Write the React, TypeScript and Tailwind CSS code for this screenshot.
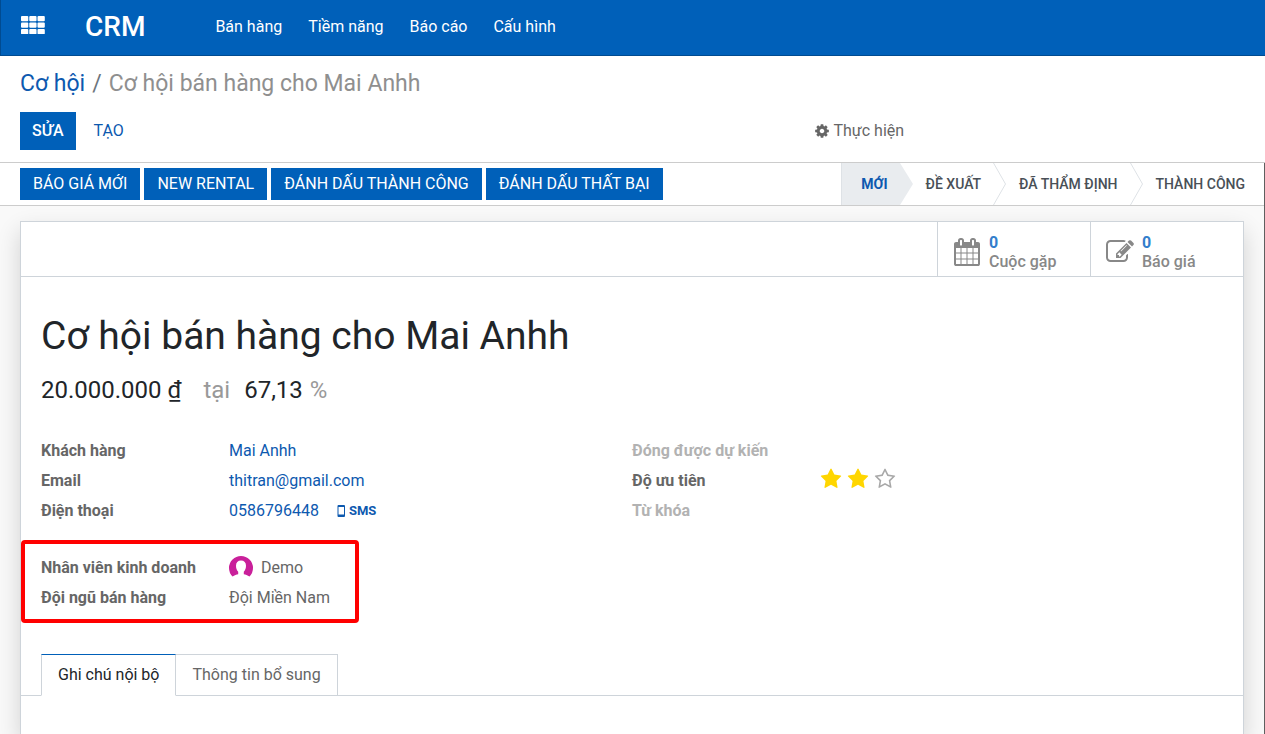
import { useState, type ReactNode } from 'react';
import clsx from 'clsx';

const ICONS = {
  cog: 'M1152 896q0-106-75-181t-181-75-181 75-75 181 75 181 181 75 181-75 75-181zm512-109v222q0 12-8 23t-20 13l-185 28q-19 54-39 91 35 50 107 138 10 12 10 25t-9 23q-27 37-99 108t-94 71q-12 0-26-9l-138-108q-44 23-91 38-16 136-29 186-7 28-36 28h-222q-14 0-24.5-8.5t-11.5-21.5l-28-184q-49-16-90-37l-141 107q-10 9-25 9-14 0-25-11-126-114-165-168-7-10-7-23 0-12 8-23 15-21 51-66.5t54-70.5q-27-50-41-99l-183-27q-13-2-21-12.5t-8-23.5v-222q0-12 8-23t19-13l186-28q14-46 39-92-40-57-107-138-10-12-10-24 0-10 9-23 26-36 98.5-107.5t94.5-71.5q13 0 26 10l138 107q44-23 91-38 16-136 29-186 7-28 36-28h222q14 0 24.5 8.5t11.5 21.5l28 184q49 16 90 37l142-107q9-9 24-9 13 0 25 10 129 119 165 170 7 8 7 22 0 12-8 23-15 21-51 66.5t-54 70.5q26 50 41 98l183 28q13 2 21 12.5t8 23.5z',
  star: 'M1728 647q0 22-26 48l-363 354 86 500q1 7 1 20 0 21-10.5 35.5t-30.5 14.5q-19 0-40-12l-449-236-449 236q-22 12-40 12-21 0-31.5-14.5t-10.5-35.5q0-6 2-20l86-500-364-354q-25-27-25-48 0-37 56-46l502-73 225-455q19-41 49-41t49 41l225 455 502 73q56 9 56 46z',
  starOutline:
    'M1201 1004l306-297-422-62-189-382-189 382-422 62 306 297-73 421 378-199 377 199zm527-357q0 22-26 48l-363 354 86 500q1 7 1 20 0 50-41 50-19 0-40-12l-449-236-449 236q-22 12-40 12-21 0-31.5-14.5t-10.5-35.5q0-6 2-20l86-500-364-354q-25-27-25-48 0-37 56-46l502-73 225-455q19-41 49-41t49 41l225 455 502 73q56 9 56 46z',
  edit: 'M888 1184l116-116-152-152-116 116v56h96v96h56zm440-720q-16-16-33 1l-350 350q-17 17-1 33t33-1l350-350q17-17 1-33zm80 594v190q0 119-84.5 203.5t-203.5 84.5h-832q-119 0-203.5-84.5t-84.5-203.5v-832q0-119 84.5-203.5t203.5-84.5h832q63 0 117 25 15 7 18 23 3 17-9 29l-49 49q-14 14-32 8-23-6-45-6h-832q-66 0-113 47t-47 113v832q0 66 47 113t113 47h832q66 0 113-47t47-113v-126q0-13 9-22l64-64q15-15 35-7t20 29zm-96-738l288 288-672 672h-288v-288zm444 132l-92 92-288-288 92-92q28-28 68-28t68 28l152 152q28 28 28 68t-28 68z',
  calendar:
    'M192 1664h288v-288h-288v288zm352 0h320v-288h-320v288zm-352-352h288v-320h-288v320zm352 0h320v-320h-320v320zm-352-384h288v-288h-288v288zm736 736h320v-288h-320v288zm-384-736h320v-288h-320v288zm768 736h288v-288h-288v288zm-384-352h320v-320h-320v320zm-352-864v-288q0-13-9.5-22.5t-22.5-9.5h-64q-13 0-22.5 9.5t-9.5 22.5v288q0 13 9.5 22.5t22.5 9.5h64q13 0 22.5-9.5t9.5-22.5zm736 864h288v-320h-288v320zm-384-384h320v-288h-320v288zm384 0h288v-288h-288v288zm32-480v-288q0-13-9.5-22.5t-22.5-9.5h-64q-13 0-22.5 9.5t-9.5 22.5v288q0 13 9.5 22.5t22.5 9.5h64q13 0 22.5-9.5t9.5-22.5zm384-64v1280q0 52-38 90t-90 38h-1408q-52 0-90-38t-38-90v-1280q0-52 38-90t90-38h128v-96q0-66 47-113t113-47h64q66 0 113 47t47 113v96h384v-96q0-66 47-113t113-47h64q66 0 113 47t47 113v96h128q52 0 90 38t38 90z',
};

const MENU = ['Bán hàng', 'Tiềm năng', 'Báo cáo', 'Cấu hình'];
const ACTIONS = ['BÁO GIÁ MỚI', 'NEW RENTAL', 'ĐÁNH DẤU THÀNH CÔNG', 'ĐÁNH DẤU THẤT BẠI'];
const STAGES = ['MỚI', 'ĐỀ XUẤT', 'ĐÃ THẨM ĐỊNH', 'THÀNH CÔNG'];
const TABS = ['Ghi chú nội bộ', 'Thông tin bổ sung'];

function Icon({ name, className }: { name: keyof typeof ICONS; className?: string }) {
  return (
    <svg viewBox="0 0 1792 1792" fill="currentColor" aria-hidden="true" className={className}>
      <path d={ICONS[name]} />
    </svg>
  );
}

function AppsIcon() {
  return (
    <svg viewBox="0 0 24 18" fill="currentColor" aria-hidden="true" className="h-[18px] w-6">
      {[0, 6.5, 13].map((y) =>
        [0, 8.25, 16.5].map((x) => (
          <rect key={`${x}-${y}`} x={x} y={y} width="7.3" height="5.2" rx="1" />
        ))
      )}
    </svg>
  );
}

function Navbar() {
  return (
    <nav className="flex h-14 items-center border-b border-l border-[#004b91] bg-[#0060b9] pb-0.5 pl-5 text-white">
      <button aria-label="Ứng dụng" className="cursor-pointer pb-1">
        <AppsIcon />
      </button>
      <a href="#" className="ml-10 text-[28px] font-medium leading-8">
        CRM
      </a>
      <ul className="ml-[70px] flex gap-[26px]">
        {MENU.map((item) => (
          <li key={item}>
            <a href="#">{item}</a>
          </li>
        ))}
      </ul>
    </nav>
  );
}

function ControlPanel() {
  return (
    <header className="border-b border-[#cccccc] bg-white px-5 pt-3 pb-3">
      <ol className="flex gap-[7px] text-[23px] leading-8 text-[#8f8f8f]">
        <li>
          <a href="#" className="text-[#0d59af]">
            Cơ hội
          </a>
        </li>
        <li aria-hidden="true" className="text-[#6c757d]">
          /
        </li>
        <li>Cơ hội bán hàng cho Mai Anhh</li>
      </ol>
      <div className="mt-3 grid grid-cols-2 items-center">
        <div className="flex">
          <button className="h-[38px] bg-[#0060b9] px-3 font-medium text-white">SỬA</button>
          <button className="h-[38px] px-[18px] text-[#0d59af]">TẠO</button>
        </div>
        <button className="flex items-center gap-1 pl-[181px] text-[#666666]">
          <Icon name="cog" className="size-4" />
          Thực hiện
        </button>
      </div>
    </header>
  );
}

function StageArrow({ filled }: { filled: boolean }) {
  return (
    <svg viewBox="0 0 13 42" aria-hidden="true" className="h-[42px] w-[13px]">
      {filled ? (
        <path d="M0 0L13 21L0 42Z" fill="#e9ecef" />
      ) : (
        <path d="M0.5 0L12.5 21L0.5 42" fill="none" stroke="#dee2e6" />
      )}
    </svg>
  );
}

function StatusBar() {
  const [current, setCurrent] = useState(0);

  return (
    <div className="flex items-center justify-between border-b border-[#cccccc] bg-white pl-5">
      <div className="flex gap-1">
        {ACTIONS.map((action) => (
          <button key={action} className="h-8 bg-[#0060b9] px-[13px] text-white">
            {action}
          </button>
        ))}
      </div>
      <ol className="flex border-l border-[#dee2e6] text-sm font-medium">
        {STAGES.map((stage, i) => (
          <li key={stage} className="flex">
            <button
              onClick={() => setCurrent(i)}
              className={clsx(
                'h-[42px]',
                i === 0 ? 'pl-[19px]' : 'pl-[13px]',
                i === STAGES.length - 1 ? 'pr-[19px]' : 'pr-3',
                i === current ? 'bg-[#e9ecef] font-bold text-[#0d59af]' : 'text-[#495057]'
              )}
            >
              {stage}
            </button>
            {i < STAGES.length - 1 && <StageArrow filled={i === current} />}
          </li>
        ))}
      </ol>
    </div>
  );
}

function StatButton({ icon, label }: { icon: 'calendar' | 'edit'; label: string }) {
  return (
    <button className="flex h-[54px] w-[153px] items-center border-l border-[#ced4da] pl-[15px] pt-[6px] text-left font-medium text-[#888888]">
      <Icon name={icon} className="size-7" />
      <span className="ml-2 flex flex-col leading-[19px]">
        <span className="font-bold text-[#337ecc]">0</span>
        {label}
      </span>
    </button>
  );
}

function Field({ label, muted, children }: { label: string; muted?: boolean; children?: ReactNode }) {
  return (
    <div className="flex h-[30px] items-center">
      <dt className={clsx('w-[188px] font-bold', muted ? 'text-[#b2b2b2]' : 'text-[#666666]')}>
        {label}
      </dt>
      <dd className="flex items-center text-[#666666]">{children}</dd>
    </div>
  );
}

function Priority() {
  const [value, setValue] = useState(2);

  return (
    <div className="flex gap-[5px] pb-1">
      {[1, 2, 3].map((n) => (
        <button
          key={n}
          aria-label={`Ưu tiên ${n}`}
          onClick={() => setValue(n)}
          className={n <= value ? 'text-[#ffd600]' : 'text-[#a8a8a8]'}
        >
          <Icon name={n <= value ? 'star' : 'starOutline'} className="size-[22px]" />
        </button>
      ))}
    </div>
  );
}

function Avatar() {
  return (
    <svg viewBox="0 0 24 24" aria-hidden="true" className="size-6">
      <path
        fill="#c9209a"
        d="M3.500 20.500A12 12 0 1 1 20.500 20.500C18.500 19.200 16.500 18.800 14.800 18.300V15.800C16.300 14.300 17 12 17 9.800C17 6.500 15.200 4.500 12 4.500S7 6.500 7 9.800C7 12 7.700 14.300 9.200 15.800V18.300C7.500 18.800 5.500 19.200 3.500 20.500Z"
      />
    </svg>
  );
}

function Details() {
  return (
    <div className="mt-[30px] grid grid-cols-2 items-start">
      <div>
        <dl>
          <Field label="Khách hàng">
            <a href="#" className="text-[#0d59af]">Mai Anhh</a>
          </Field>
          <Field label="Email">
            <a href="mailto:thitran@gmail.com" className="text-[#0d59af]">thitran@gmail.com</a>
          </Field>
          <Field label="Điện thoại">
            <a href="tel:0586796448" className="text-[#0d59af]">0586796448</a>
            <button className="ml-[18px] flex items-center gap-1 text-[13px] font-bold text-[#0d59af]">
              <svg viewBox="0 0 8 12" fill="currentColor" aria-hidden="true" className="h-3 w-2">
                <path
                  fillRule="evenodd"
                  d="M1.500 0H7Q8 0 8 1V11Q8 12 7 12H1.500Q0.500 12 0.500 11V1Q0.500 0 1.500 0ZM1.500 2V9.500H7V2Z"
                />
              </svg>
              SMS
            </button>
          </Field>
        </dl>
        <dl className="relative mt-[27px]">
          <Field label="Nhân viên kinh doanh">
            <Avatar />
            <span className="ml-2">Demo</span>
          </Field>
          <Field label="Đội ngũ bán hàng">Đội Miền Nam</Field>
          <div className="pointer-events-none absolute -left-5 -top-[13px] h-[83px] w-[338px] rounded-sm border-4 border-[#ff0000]" />
        </dl>
      </div>
      <dl>
        <Field label="Đóng được dự kiến" muted />
        <Field label="Độ ưu tiên">
          <Priority />
        </Field>
        <Field label="Từ khóa" muted />
      </dl>
    </div>
  );
}

function Notebook() {
  const [active, setActive] = useState(0);

  return (
    <div role="tablist" className="mt-[41px] flex border-b border-[#ced4da] pl-5">
      {TABS.map((tab, i) => (
        <button
          key={tab}
          role="tab"
          aria-selected={i === active}
          onClick={() => setActive(i)}
          className={clsx(
            '-mb-px h-[42px] border-y border-r border-x-[#ced4da] px-4',
            i === 0 && 'border-l',
            i === active
              ? 'border-t-[#0060b9] border-b-white text-[#212529]'
              : 'border-y-[#ced4da] text-[#666666]'
          )}
        >
          {tab}
        </button>
      ))}
    </div>
  );
}

export default function App() {
  return (
    <div className="flex min-h-screen flex-col bg-white font-['Roboto','Noto_Sans',sans-serif] text-base text-[#212529]">
      <Navbar />
      <ControlPanel />
      <main className="flex flex-1 flex-col border-r border-[#5f5f5f] bg-[#f9f9f9]">
        <StatusBar />
        <div className="flex flex-1 flex-col overflow-hidden px-5 pt-[15px]">
          <section className="flex-1 border-x border-t border-[#ced4da] bg-white shadow-[0_10px_22px_rgba(0,0,0,0.16)]">
            <div className="flex justify-end border-b border-[#ced4da]">
              <StatButton icon="calendar" label="Cuộc gặp" />
              <StatButton icon="edit" label="Báo giá" />
            </div>
            <div className="px-5 pt-[35px]">
              <h1 className="text-[39px] leading-[48px]">Cơ hội bán hàng cho Mai Anhh</h1>
              <h2 className="mt-[14px] flex text-2xl leading-8">
                <span>20.000.000 ₫</span>
                <span className="ml-[22px] text-[#999999]">tại</span>
                <span className="ml-[14px]">67,13</span>
                <span className="ml-[7px] text-[#999999]">%</span>
              </h2>
              <Details />
            </div>
            <Notebook />
          </section>
        </div>
      </main>
    </div>
  );
}
